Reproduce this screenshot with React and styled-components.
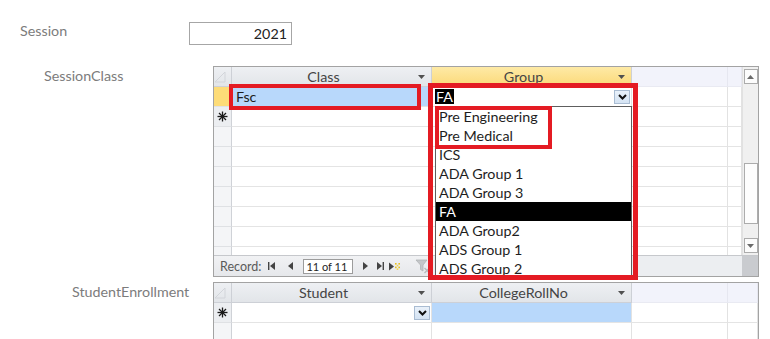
import React from "react";
import styled, { createGlobalStyle } from "styled-components";

const GlobalStyle = createGlobalStyle`
  html, body { margin: 0; padding: 0; background: #ffffff; }
  body {
    width: 770px; height: 339px; overflow: hidden;
    font-family: "Lato", "Open Sans", sans-serif;
    font-size: 14px; color: #1e1e1e;
  }
`;

const Form = styled.div`
  display: flex;
  flex-direction: column;
  padding-top: 22px;
`;

const FieldRow = styled.div`
  display: flex;
  align-items: flex-start;
  margin-top: ${(p) => p.$mt || 0}px;
`;

const Label = styled.div`
  box-sizing: border-box;
  width: ${(p) => p.$w}px;
  padding-left: ${(p) => p.$indent}px;
  line-height: ${(p) => p.$lh}px;
  color: #7c7c7c;
  font-size: 14.3px;
  white-space: nowrap;
`;

const TextBox = styled.div`
  box-sizing: border-box;
  width: 103px;
  height: 23px;
  border: 1px solid #a6a6a6;
  text-align: right;
  padding-right: 4px;
  line-height: 21px;
  font-size: 14.3px;
  color: #222;
`;

const Sheet = styled.div`
  position: relative;
  box-sizing: border-box;
  width: 546px;
  height: ${(p) => p.$h}px;
  border: 1px solid #a3a3a3;
  border-bottom-width: ${(p) => (p.$open ? 0 : 1)}px;
  display: flex;
  flex-direction: column;
  background: #fff;
`;

const SheetBody = styled.div`
  display: flex;
  flex: 1;
  min-height: 0;
`;

const GridArea = styled.div`
  flex: 1;
  overflow: hidden;
  display: flex;
  flex-direction: column;
`;

const Row = styled.div`
  display: grid;
  grid-template-columns: ${(p) => p.$cols};
  height: 20px;
  flex-shrink: 0;
`;

const headBg = {
  normal: "linear-gradient(#eef0f3, #e2e5e9)",
  active: "linear-gradient(#feeaa6, #fbd978)",
  empty: "#f2f3fb",
  corner: "linear-gradient(#eef0f3, #e2e5e9)",
};

const HeadCell = styled.div`
  box-sizing: border-box;
  display: flex;
  align-items: center;
  background: ${(p) => headBg[p.$kind || "normal"]};
  border-right: 1px solid ${(p) => (p.$kind === "empty" ? "#e6e7f0" : "#cdd0d6")};
  border-bottom: 1px solid ${(p) => (p.$kind === "empty" ? "#e9eaf2" : "#cdd0d6")};
  color: #454545;
  font-size: 14.3px;
`;

const HeadText = styled.span`
  flex: 1;
  text-align: center;
  padding-left: 4px;
`;

const ArrowBox = styled.span`
  width: 20px;
  display: flex;
  justify-content: center;
  align-items: center;
`;

const selBg = {
  current: "#fddc78",
  newrow: "#eceef1",
  plain: "#f4f5f7",
};

const Selector = styled.div`
  box-sizing: border-box;
  background: ${(p) => selBg[p.$kind || "plain"]};
  border-right: 1px solid #cfd2d7;
  border-bottom: 1px solid #dfe1e4;
  display: flex;
  align-items: center;
  justify-content: center;
`;

const Cell = styled.div`
  box-sizing: border-box;
  position: relative;
  background: ${(p) => p.$bg || "#fff"};
  border-right: 1px solid #e2e2e2;
  border-bottom: 1px solid #e4e4e4;
  display: flex;
  align-items: center;
  padding-left: ${(p) => (p.$pad ?? 4)}px;
  font-size: 14.3px;
  color: #1e1e1e;
  white-space: nowrap;
`;

const Highlight = styled.span`
  background: #000;
  color: #fff;
  padding: 0 1px;
  line-height: 15px;
`;

const ComboButton = styled.span`
  margin-left: auto;
  margin-right: 1px;
  box-sizing: border-box;
  width: 16px;
  height: 14px;
  background: linear-gradient(#e9f1fa, #d4e3f3);
  border: 1px solid #a9bcd2;
  display: flex;
  align-items: center;
  justify-content: center;
`;

const VScroll = styled.div`
  width: 16px;
  background: #f0f0f0;
  border-left: 1px solid #e1e1e1;
  box-sizing: border-box;
  display: flex;
  flex-direction: column;
  align-items: center;
  padding: 2px 0 2px;
`;

const ScrollBtn = styled.div`
  box-sizing: border-box;
  width: 14px;
  height: 15px;
  background: #fcfcfc;
  border: 1px solid #acacac;
  display: flex;
  align-items: center;
  justify-content: center;
`;

const Thumb = styled.div`
  box-sizing: border-box;
  width: 14px;
  height: 61px;
  margin-top: ${(p) => p.$offset}px;
  background: #fdfdfd;
  border: 1px solid #acacac;
`;

const Spacer = styled.div`
  flex: 1;
`;

const BottomBar = styled.div`
  display: flex;
  height: 20px;
  border-top: 1px solid #c6c8cc;
  box-sizing: content-box;
`;

const NavBar = styled.div`
  width: 216px;
  display: flex;
  align-items: center;
  background: linear-gradient(#f1f2f4, #e6e8eb);
  border-right: 1px solid #d0d2d6;
  font-size: 12.5px;
  color: #5a5a5a;
  padding-left: 6px;
  box-sizing: border-box;
  white-space: nowrap;
`;

const NavText = styled.span`
  margin-right: 5px;
`;

const NavIcon = styled.span`
  display: inline-flex;
  align-items: center;
  justify-content: center;
  flex-shrink: 0;
  width: ${(p) => p.$w || 12}px;
  margin-left: ${(p) => p.$ml || 0}px;
`;

const NavBox = styled.div`
  box-sizing: border-box;
  flex-shrink: 0;
  width: 50px;
  height: 15px;
  margin-left: ${(p) => p.$ml || 0}px;
  border: 1px solid #9c9c9c;
  background: #fff;
  color: #1e1e1e;
  font-size: 11px;
  line-height: 13px;
  padding-left: 2px;
  white-space: nowrap;
  overflow: hidden;
`;

const HScroll = styled.div`
  flex: 1;
  background: #eceef1;
`;

const Corner = styled.div`
  width: 16px;
  background: #c9cbcf;
`;

const DropList = styled.div`
  position: absolute;
  left: 221px;
  top: 39px;
  width: 197px;
  box-sizing: border-box;
  border: 1px solid #5e5e5e;
  background: #fff;
  z-index: 2;
`;

const DropItem = styled.div`
  height: 19px;
  line-height: 19px;
  padding-left: 3px;
  font-size: 14.3px;
  background: ${(p) => (p.$selected ? "#000" : "transparent")};
  color: ${(p) => (p.$selected ? "#fff" : "#1e1e1e")};
  white-space: nowrap;
`;

const RedBox = styled.div`
  position: absolute;
  left: ${(p) => p.$l}px;
  top: ${(p) => p.$t}px;
  width: ${(p) => p.$w}px;
  height: ${(p) => p.$h}px;
  box-sizing: border-box;
  border: ${(p) => p.$b || 4}px solid #e41b23;
  z-index: 3;
  pointer-events: none;
`;

/* ---------- icons ---------- */
const HeadArrow = () => (
  <svg width="7" height="4" viewBox="0 0 7 4">
    <path d="M0 0 H7 L3.5 4 Z" fill="#505050" />
  </svg>
);

const Chevron = () => (
  <svg width="9" height="6" viewBox="0 0 9 6">
    <path d="M1 1 L4.5 4.5 L8 1" fill="none" stroke="#111" strokeWidth="2" />
  </svg>
);

const Asterisk = () => (
  <svg width="11" height="11" viewBox="0 0 11 11">
    <g stroke="#1a1a1a" strokeWidth="1.3">
      <line x1="5.5" y1="0.5" x2="5.5" y2="10.5" />
      <line x1="0.5" y1="5.5" x2="10.5" y2="5.5" />
      <line x1="2" y1="2" x2="9" y2="9" />
      <line x1="9" y1="2" x2="2" y2="9" />
    </g>
  </svg>
);

const SelectAllCorner = () => (
  <svg width="12" height="12" viewBox="0 0 12 12">
    <path d="M11 1 L11 11 L1 11 Z" fill="none" stroke="#d2d5da" strokeWidth="1" />
  </svg>
);

const UpTri = () => (
  <svg width="7" height="4" viewBox="0 0 7 4">
    <path d="M0 4 H7 L3.5 0 Z" fill="#6a6a6a" />
  </svg>
);
const DownTri = () => (
  <svg width="7" height="4" viewBox="0 0 7 4">
    <path d="M0 0 H7 L3.5 4 Z" fill="#6a6a6a" />
  </svg>
);

const FirstIcon = () => (
  <svg width="7" height="8" viewBox="0 0 7 8">
    <rect x="0" y="0" width="1.4" height="8" fill="#444" />
    <path d="M7 0 V8 L2 4 Z" fill="#444" />
  </svg>
);
const PrevIcon = () => (
  <svg width="5" height="8" viewBox="0 0 5 8">
    <path d="M5 0 V8 L0 4 Z" fill="#444" />
  </svg>
);
const NextIcon = () => (
  <svg width="5" height="8" viewBox="0 0 5 8">
    <path d="M0 0 V8 L5 4 Z" fill="#444" />
  </svg>
);
const LastIcon = () => (
  <svg width="7" height="8" viewBox="0 0 7 8">
    <path d="M0 0 V8 L5 4 Z" fill="#444" />
    <rect x="5.6" y="0" width="1.4" height="8" fill="#444" />
  </svg>
);
const NewIcon = () => (
  <svg width="12" height="9" viewBox="0 0 12 9">
    <path d="M0 0.5 V8.5 L5 4.5 Z" fill="#444" />
    <g fill="#e9c021">
      <rect x="6" y="1" width="1.6" height="1.6" />
      <rect x="9.4" y="1" width="1.6" height="1.6" />
      <rect x="7.7" y="2.8" width="1.6" height="1.6" fill="#f3d64a" />
      <rect x="6" y="4.6" width="1.6" height="1.6" />
      <rect x="9.4" y="4.6" width="1.6" height="1.6" />
      <rect x="7.7" y="6.4" width="1.6" height="1.6" fill="#f3d64a" />
    </g>
  </svg>
);
const FilterIcon = () => (
  <svg width="16" height="15" viewBox="0 0 16 15">
    <path d="M1 1 H12 L8 6 V12 L5.5 10.5 V6 Z" fill="#c4c6c9" stroke="#b0b2b5" strokeWidth="0.8" />
    <path d="M9.5 9 L14.5 14 M14.5 9 L9.5 14" stroke="#b7b9bc" strokeWidth="1.4" />
  </svg>
);

/* ---------- data ---------- */
const COLS1 = "18px 200px 200px 96px 14px";
const COLS2 = "18px 200px 200px 96px 30px";

const groups = [
  "Pre Engineering",
  "Pre Medical",
  "ICS",
  "ADA Group 1",
  "ADA Group 3",
  "FA",
  "ADA Group2",
  "ADS Group 1",
  "ADS Group 2",
];

const EmptyRow = ({ cols }) => (
  <Row $cols={cols}>
    <Selector />
    <Cell />
    <Cell />
    <Cell />
    <Cell />
  </Row>
);

export default function App() {
  return (
    <>
      <GlobalStyle />
      <Form>
        <FieldRow>
          <Label $w={189} $indent={20} $lh={18}>
            Session
          </Label>
          <TextBox>2021</TextBox>
        </FieldRow>

        <FieldRow $mt={21}>
          <Label $w={213} $indent={44} $lh={20}>
            SessionClass
          </Label>
          <Sheet $h={211}>
            <SheetBody>
              <GridArea>
                <Row $cols={COLS1}>
                  <HeadCell $kind="corner">
                    <SelectAllCorner />
                  </HeadCell>
                  <HeadCell>
                    <HeadText>Class</HeadText>
                    <ArrowBox>
                      <HeadArrow />
                    </ArrowBox>
                  </HeadCell>
                  <HeadCell $kind="active">
                    <HeadText>Group</HeadText>
                    <ArrowBox>
                      <HeadArrow />
                    </ArrowBox>
                  </HeadCell>
                  <HeadCell $kind="empty" />
                  <HeadCell $kind="empty" />
                </Row>
                <Row $cols={COLS1}>
                  <Selector $kind="current" />
                  <Cell $bg="#b8d8fb">Fsc</Cell>
                  <Cell $pad={3}>
                    <Highlight>FA</Highlight>
                    <ComboButton>
                      <Chevron />
                    </ComboButton>
                  </Cell>
                  <Cell />
                  <Cell />
                </Row>
                <Row $cols={COLS1}>
                  <Selector $kind="newrow">
                    <Asterisk />
                  </Selector>
                  <Cell />
                  <Cell />
                  <Cell />
                  <Cell />
                </Row>
                {[0, 1, 2, 3, 4, 5, 6].map((i) => (
                  <EmptyRow key={i} cols={COLS1} />
                ))}
              </GridArea>
              <VScroll>
                <ScrollBtn>
                  <UpTri />
                </ScrollBtn>
                <Thumb $offset={79} />
                <Spacer />
                <ScrollBtn>
                  <DownTri />
                </ScrollBtn>
              </VScroll>
            </SheetBody>
            <BottomBar>
              <NavBar>
                <NavText>Record:</NavText>
                <NavIcon $w={10} $ml={0}>
                  <FirstIcon />
                </NavIcon>
                <NavIcon $w={12} $ml={8}>
                  <PrevIcon />
                </NavIcon>
                <NavBox $ml={7}>11 of 11</NavBox>
                <NavIcon $w={12} $ml={6}>
                  <NextIcon />
                </NavIcon>
                <NavIcon $w={12} $ml={3}>
                  <LastIcon />
                </NavIcon>
                <NavIcon $w={14} $ml={2}>
                  <NewIcon />
                </NavIcon>
                <NavIcon $w={18} $ml={12}>
                  <FilterIcon />
                </NavIcon>
              </NavBar>
              <HScroll />
              <Corner />
            </BottomBar>

            <DropList>
              {groups.map((g) => (
                <DropItem key={g} $selected={g === "FA"}>
                  {g}
                </DropItem>
              ))}
            </DropList>
            <RedBox $l={15} $t={17} $w={192} $h={26} $b={4} />
            <RedBox $l={214} $t={16} $w={210} $h={197} $b={5} />
            <RedBox $l={221} $t={39} $w={117} $h={43} $b={4} />
          </Sheet>
        </FieldRow>

        <FieldRow $mt={5}>
          <Label $w={213} $indent={72} $lh={20}>
            StudentEnrollment
          </Label>
          <Sheet $h={57} $open>
            <GridArea>
              <Row $cols={COLS2}>
                <HeadCell $kind="corner">
                  <SelectAllCorner />
                </HeadCell>
                <HeadCell>
                  <HeadText>Student</HeadText>
                  <ArrowBox>
                    <HeadArrow />
                  </ArrowBox>
                </HeadCell>
                <HeadCell>
                  <HeadText>CollegeRollNo</HeadText>
                  <ArrowBox>
                    <HeadArrow />
                  </ArrowBox>
                </HeadCell>
                <HeadCell $kind="empty" />
                <HeadCell $kind="empty" />
              </Row>
              <Row $cols={COLS2}>
                <Selector $kind="newrow">
                  <Asterisk />
                </Selector>
                <Cell $pad={3}>
                  <ComboButton>
                    <Chevron />
                  </ComboButton>
                </Cell>
                <Cell $bg="#b8d8fb" />
                <Cell />
                <Cell />
              </Row>
              <EmptyRow cols={COLS2} />
            </GridArea>
          </Sheet>
        </FieldRow>
      </Form>
    </>
  );
}
